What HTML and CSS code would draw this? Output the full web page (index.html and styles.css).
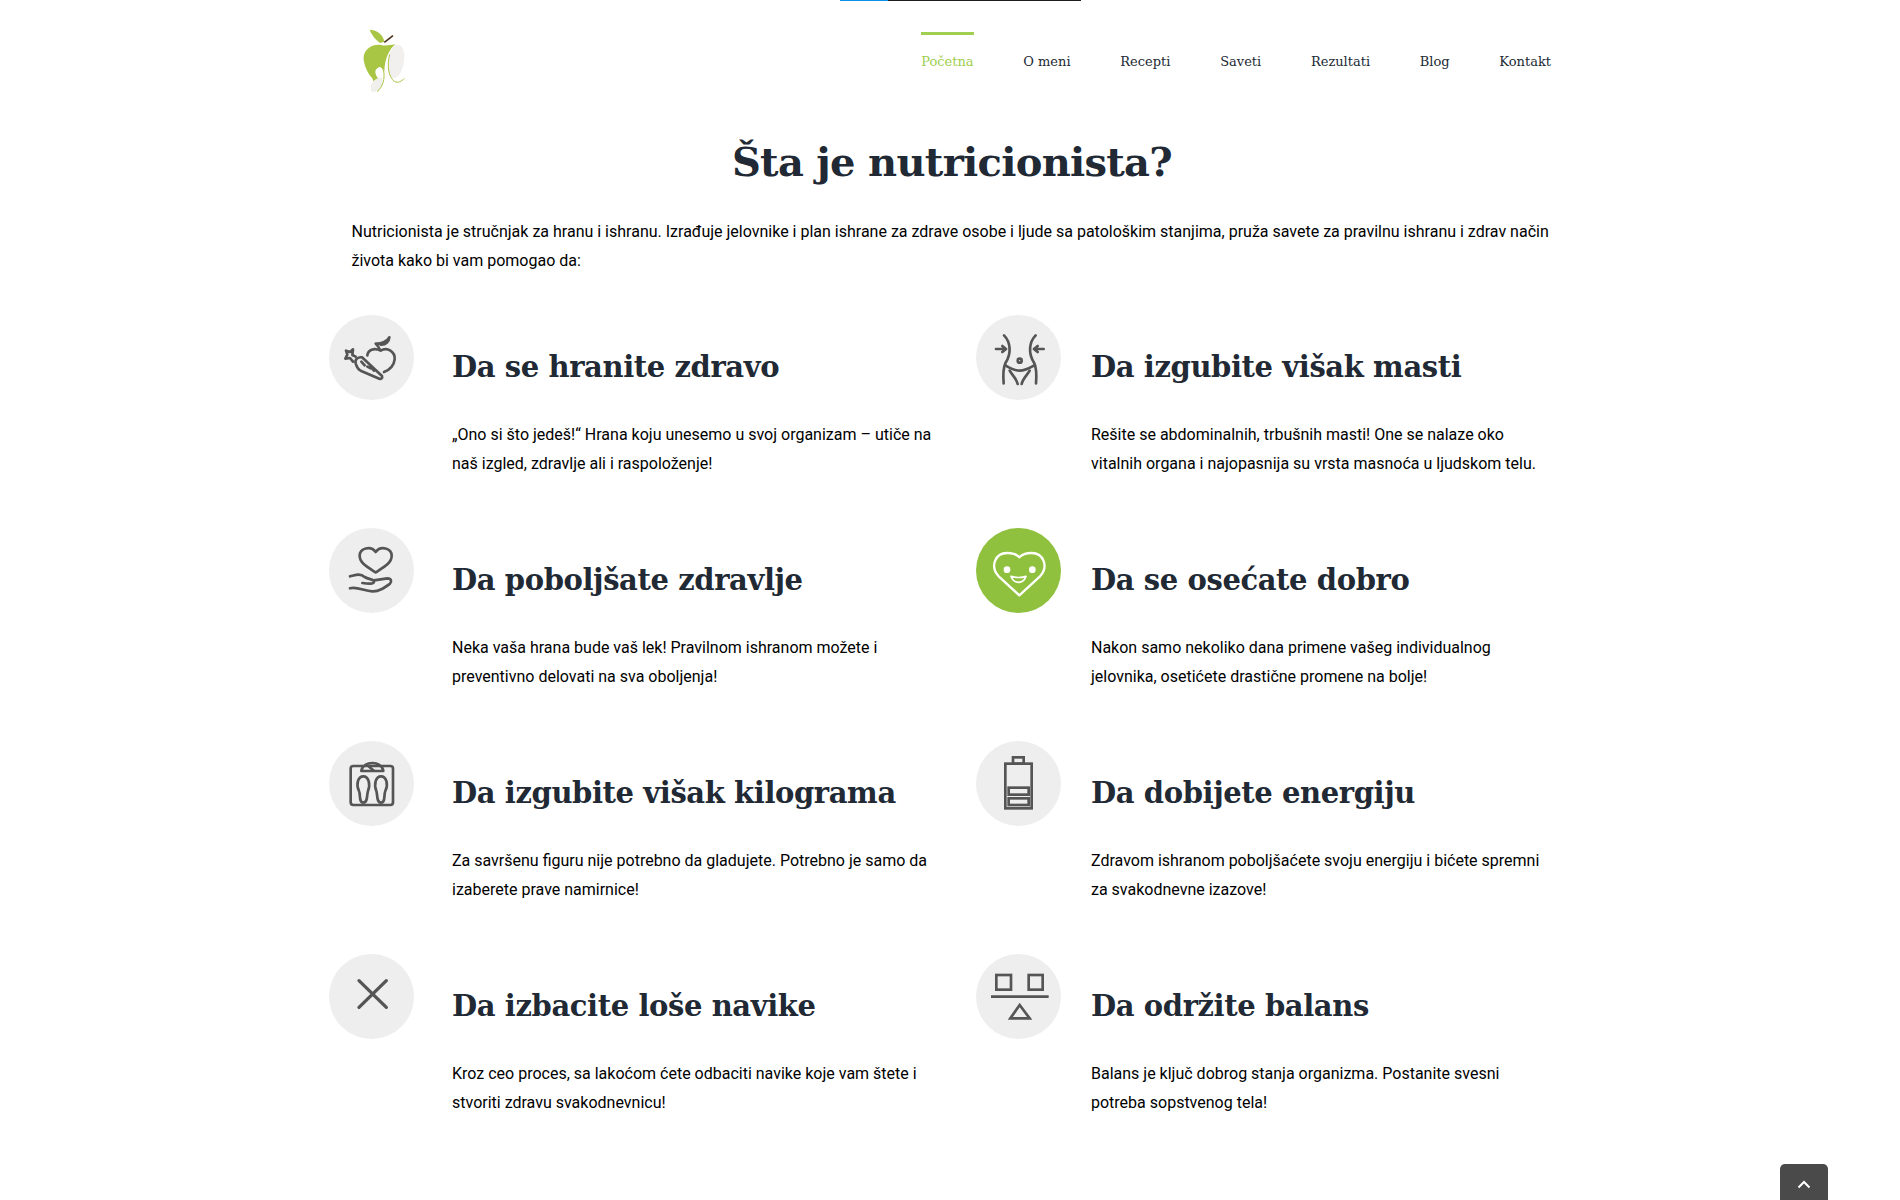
FILE: index.html
```html
<!DOCTYPE html>
<html lang="sr">
<head>
<meta charset="utf-8">
<title>Šta je nutricionista?</title>
<link rel="stylesheet" href="styles.css">
</head>
<body>
<div class="loader"><span class="loader-fill"></span></div>
<div class="page">
  <header class="header">
    <a class="logo" href="#" aria-label="Logo">
      <svg width="42" height="64" viewBox="70 42 126 192">
        <path d="M122 84C112 78 96 62 90 44C108 44 130 56 134 80Z" fill="#a9c544"/>
        <path d="M134 82L160 62" stroke="#4b3420" stroke-width="5"/>
        <path d="M125 90C135 94 150 90 168 88C150 100 135 130 134 170C130 155 118 150 108 165C103 180 118 190 124 205C112 205 103 210 98 190C80 170 70 140 72 125C75 100 100 86 125 90Z" fill="#a9c544"/>
        <path d="M128 192C130 215 118 232 98 230C88 228 92 200 110 192C118 188 124 186 128 192Z" fill="#f0efec"/>
        <path d="M106 165C112 148 128 152 132 168C136 190 130 216 112 230" fill="none" stroke="#a9c544" stroke-width="3"/>
        <path d="M165 92C185 84 196 105 194 130C192 160 180 188 162 190C146 190 142 165 146 135C148 115 155 98 165 92Z" fill="#f1f0ee"/>
        <path d="M150 118C142 150 145 185 165 200C175 204 185 200 194 190" fill="none" stroke="#a9c544" stroke-width="3"/>
      </svg>
    </a>
    <nav class="nav">
      <a class="nav-link active" href="#">Početna</a>
      <a class="nav-link" href="#">O meni</a>
      <a class="nav-link" href="#">Recepti</a>
      <a class="nav-link" href="#">Saveti</a>
      <a class="nav-link" href="#">Rezultati</a>
      <a class="nav-link" href="#">Blog</a>
      <a class="nav-link" href="#">Kontakt</a>
    </nav>
  </header>

  <h1 class="title">Šta je nutricionista?</h1>
  <p class="intro">Nutricionista je stručnjak za hranu i ishranu. Izrađuje jelovnike i plan ishrane za zdrave osobe i ljude sa patološkim stanjima, pruža savete za pravilnu ishranu i zdrav način života kako bi vam pomogao da:</p>

  <section class="features">
    <div class="icon">
      <svg viewBox="25 45 255 255" width="85" height="85" class="glyph">
        <path d="M140 166C142 150 160 142 180 152C200 140 224 155 222 178C220 195 210 208 190 216"/>
        <path d="M178 150C176 142 170 136 165 131C180 132 200 125 206 112C205 125 195 135 180 134"/>
        <path d="M105 190C102 178 112 170 124 172L184 228C186 234 182 238 176 236L120 212C112 208 108 200 105 190Z"/>
        <path d="M122 185L132 196M140 200L150 205M148 198L160 212"/>
        <path d="M105 170L95 165L97 148L88 156L76 152L80 164L74 176L88 174L97 185"/>
      </svg>
    </div>
    <div class="feature-text">
      <h3>Da se hranite zdravo</h3>
      <p>„Ono si što jedeš!“ Hrana koju unesemo u svoj organizam – utiče na naš izgled, zdravlje ali i raspoloženje!</p>
    </div>
    <div class="icon">
      <svg viewBox="47 45 255 255" width="85" height="85" class="glyph">
        <path d="M131 106C150 125 155 160 135 190C128 205 128 225 130 250"/>
        <path d="M226 106C207 125 202 160 222 190C229 205 229 225 227 250"/>
        <circle cx="178" cy="182" r="6"/>
        <path d="M135 196C150 205 165 212 178 212C191 212 206 205 222 196"/>
        <path d="M148 212C155 225 168 235 172 252M208 212C201 225 188 235 184 252"/>
        <path d="M107 147H136M126 138L137 147L126 156M250 147H222M232 138L221 147L232 156"/>
      </svg>
    </div>
    <div class="feature-text">
      <h3>Da izgubite višak masti</h3>
      <p>Rešite se abdominalnih, trbušnih masti! One se nalaze oko vitalnih organa i najopasnija su vrsta masnoća u ljudskom telu.</p>
    </div>

    <div class="icon">
      <svg viewBox="25 25 255 255" width="85" height="85" class="glyph">
        <path d="M165 158C140 142 117 130 117 108C117 86 150 76 165 97C180 76 213 86 213 108C213 130 190 142 165 158Z"/>
        <path d="M88 170C105 166 118 160 132 172C145 180 160 178 160 186C160 194 140 192 125 190"/>
        <path d="M160 182L200 176C212 176 214 186 208 192C190 205 175 216 155 215C130 214 110 200 88 206"/>
      </svg>
    </div>
    <div class="feature-text">
      <h3>Da poboljšate zdravlje</h3>
      <p>Neka vaša hrana bude vaš lek! Pravilnom ishranom možete i preventivno delovati na sva oboljenja!</p>
    </div>
    <div class="icon icon-active">
      <svg viewBox="47 25 255 255" width="85" height="85" class="glyph glyph-white">
        <path d="M177 227L115 170C88 140 105 100 140 100C155 100 170 105 177 113C184 105 199 100 214 100C249 100 266 140 239 170Z"/>
        <circle class="dot" cx="140" cy="150" r="10"/>
        <circle class="dot" cx="216" cy="150" r="10"/>
        <path class="thin" d="M152 170Q175 177 197 170Q192 188 175 188Q158 188 152 170Z"/>
      </svg>
    </div>
    <div class="feature-text">
      <h3>Da se osećate dobro</h3>
      <p>Nakon samo nekoliko dana primene vašeg individualnog jelovnika, osetićete drastične promene na bolje!</p>
    </div>

    <div class="icon">
      <svg viewBox="25 20 255 255" width="85" height="85" class="glyph">
        <rect x="90" y="95" width="127" height="117" rx="8"/>
        <path d="M122 110C126 78 184 78 188 110Z"/>
        <path d="M145 97L160 109"/>
        <path d="M128 126C112 126 105 150 115 170C120 180 114 205 128 205C142 205 138 180 142 170C150 150 144 126 128 126Z"/>
        <path d="M181 126C197 126 204 150 194 170C189 180 195 205 181 205C167 205 171 180 167 170C159 150 165 126 181 126Z"/>
      </svg>
    </div>
    <div class="feature-text">
      <h3>Da izgubite višak kilograma</h3>
      <p>Za savršenu figuru nije potrebno da gladujete. Potrebno je samo da izaberete prave namirnice!</p>
    </div>
    <div class="icon">
      <svg viewBox="47 20 255 255" width="85" height="85" class="glyph glyph-square">
        <rect x="135" y="88" width="79" height="134"/>
        <rect x="158" y="69" width="32" height="19"/>
        <rect x="145" y="160" width="60" height="21"/>
        <rect x="145" y="192" width="60" height="20"/>
      </svg>
    </div>
    <div class="feature-text">
      <h3>Da dobijete energiju</h3>
      <p>Zdravom ishranom poboljšaćete svoju energiju i bićete spremni za svakodnevne izazove!</p>
    </div>

    <div class="icon">
      <svg viewBox="25 15 255 255" width="85" height="85" class="glyph glyph-bold">
        <path d="M115 95L197 175M197 95L115 175"/>
      </svg>
    </div>
    <div class="feature-text">
      <h3>Da izbacite loše navike</h3>
      <p>Kroz ceo proces, sa lakoćom ćete odbaciti navike koje vam štete i stvoriti zdravu svakodnevnicu!</p>
    </div>
    <div class="icon">
      <svg viewBox="47 15 255 255" width="85" height="85" class="glyph glyph-square">
        <rect x="108" y="78" width="44" height="44"/>
        <rect x="205" y="78" width="42" height="44"/>
        <path d="M92 143H265"/>
        <path d="M178 168L208 208H150Z"/>
      </svg>
    </div>
    <div class="feature-text">
      <h3>Da održite balans</h3>
      <p>Balans je ključ dobrog stanja organizma. Postanite svesni potreba sopstvenog tela!</p>
    </div>
  </section>
</div>
<a class="to-top" href="#" aria-label="Na vrh">
  <svg width="14" height="9" viewBox="0 0 14 9"><path d="M1.5 7.5L7 2L12.5 7.5" fill="none" stroke="#fff" stroke-width="2"/></svg>
</a>
</body>
</html>
```

FILE: styles.css
```css
* { box-sizing: border-box; }
html, body { margin: 0; padding: 0; background: #fff; }
body { font-family: Roboto, "Liberation Sans", sans-serif; font-size: 16px; color: #000; }
a { text-decoration: none; color: inherit; }

.loader { position: fixed; top: 0; left: 840px; width: 241px; height: 1px; background: #1c1c1c; }
.loader-fill { display: block; width: 48px; height: 1px; background: #0a8fe8; }

.page { width: 1200px; margin-left: 352px; }

.header { display: flex; justify-content: space-between; align-items: flex-start; height: 124px; padding-top: 29px; }
.logo { display: block; margin-left: 11px; }
.logo svg { display: block; }
.nav { display: flex; gap: 49.7px; margin: 3px 1px 0 0; }
.nav-link { display: block; border-top: 3px solid transparent; padding-top: 18px; font-family: "DejaVu Serif", serif; font-size: 13px; line-height: 18px; color: #212934; }
.nav-link.active { border-top-color: #a0ce4e; color: #a0ce4e; }

.title { margin: 0; text-align: center; font-family: "DejaVu Serif", serif; font-weight: 700; font-size: 40px; letter-spacing: -0.7px; line-height: 76px; color: #212934; }

.intro { margin: 17px 0 0 -0.5px; line-height: 29px; }

.features { display: grid; grid-template-columns: 123.5px 523.5px 115.5px 461px; grid-auto-rows: 163px; row-gap: 50px; margin: 40px 0 0 -23.5px; }
.icon { width: 85px; height: 85px; border-radius: 50%; background: #eee; }
.icon svg { display: block; }
.icon-active { background: #8fc13e; }

.glyph { fill: none; stroke: #555; stroke-width: 8; stroke-linecap: round; stroke-linejoin: round; }
.glyph-white { stroke: #fff; stroke-width: 7; }
.glyph-white .dot { fill: #fff; stroke: none; }
.glyph-white .thin { stroke-width: 5; }
.glyph-square { stroke-linecap: butt; stroke-linejoin: miter; }
.glyph-bold { stroke-width: 10; }

.feature-text { padding-right: 30px; }
.features .feature-text:nth-child(4n) { padding-right: 0; }
.feature-text h3 { margin: 36px 0 0; font-family: "DejaVu Serif", serif; font-weight: 700; font-size: 29px; letter-spacing: -0.4px; line-height: 32px; color: #212934; }
.feature-text p { margin: 37px 0 0; line-height: 29px; }

.to-top { position: fixed; left: 1780px; bottom: 0; width: 48px; height: 36px; background: #4a4a4a; border-radius: 5px 5px 0 0; display: flex; justify-content: center; padding-top: 16px; }
.to-top svg { display: block; }
```
